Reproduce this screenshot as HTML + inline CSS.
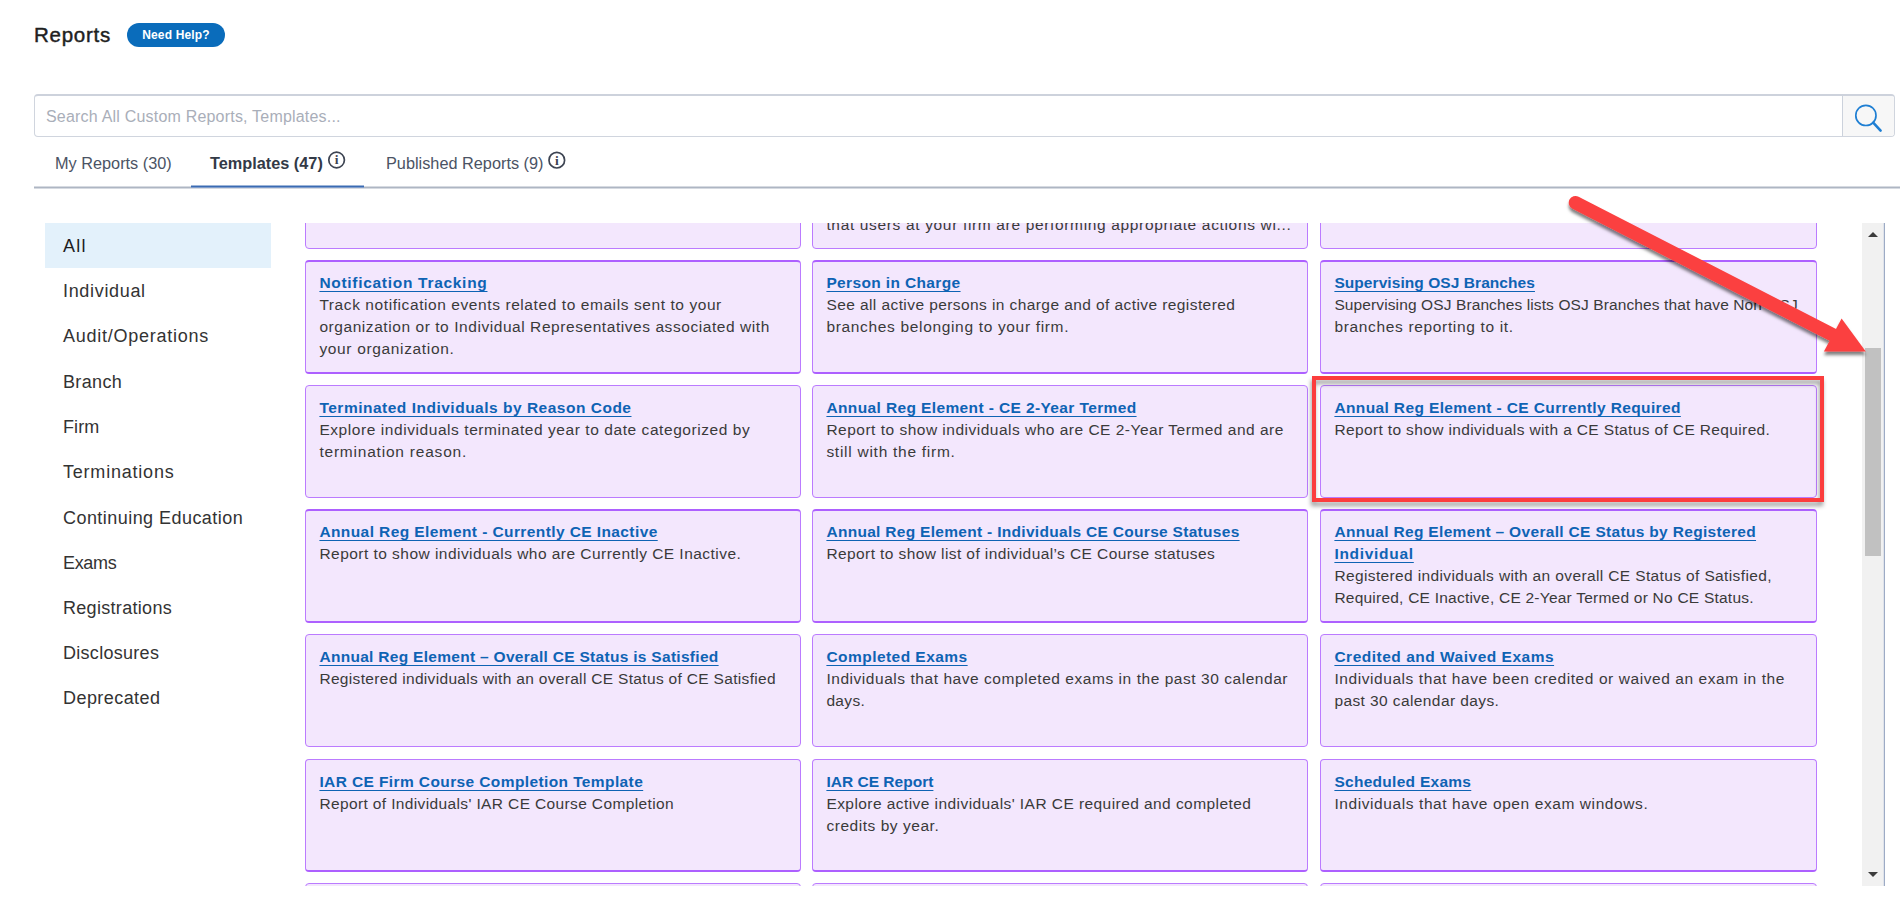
<!DOCTYPE html>
<html lang="en">
<head>
<meta charset="utf-8">
<title>Reports</title>
<style>
html,body{margin:0;padding:0;background:#fff;}
body{width:1900px;height:902px;position:relative;overflow:hidden;font-family:"Liberation Sans",sans-serif;color:#383838;}
.abs{position:absolute;}
h1{position:absolute;left:34px;top:20px;margin:0;font-size:20.5px;line-height:30px;font-weight:400;color:#1f1f1f;letter-spacing:.75px;-webkit-text-stroke:.45px #1f1f1f;white-space:nowrap;}
.pill{position:absolute;left:127px;top:23px;width:98px;height:24px;border-radius:12px;background:#0a6cbb;color:#fff;font-weight:700;font-size:12px;line-height:24px;text-align:center;letter-spacing:.15px;white-space:nowrap;}
.search{position:absolute;left:34px;top:94px;width:1861px;height:43px;box-sizing:border-box;border:1px solid #d0d5de;border-top:2px solid #cdd2dc;border-radius:4px;background:#fff;}
.search .ph{position:absolute;left:11px;top:0;line-height:41px;font-size:16px;color:#a9aeb9;letter-spacing:.2px;white-space:nowrap;}
.search .btn{position:absolute;right:0;top:0;width:51px;height:40px;border-left:1px solid #ccd2dc;background:#f7f7f7;border-radius:0 3px 3px 0;}
.tab{position:absolute;top:150px;line-height:26px;font-size:16.3px;color:#4b5364;white-space:nowrap;}
.tab.on{font-weight:700;color:#333a47;}
.rule{position:absolute;left:34px;top:186px;width:1866px;height:3px;background:linear-gradient(to bottom,#d6dae1 0 1px,#aeb6c3 1px 2px,#d6dae1 2px 3px);}
.rule2{position:absolute;left:191px;top:185px;width:173px;height:3px;background:linear-gradient(to bottom,#9db5d9 0 1px,#3a6bb3 1px 2px,#7f9ccb 2px 3px);}
.side div{position:absolute;left:45px;width:226px;height:45px;box-sizing:border-box;padding-left:18px;font-size:18px;line-height:47px;color:#333;white-space:nowrap;}
.side div.on{background:#e3f1fb;color:#1d1d1d;}
.scroll{position:absolute;left:300px;top:223px;width:1530px;height:663px;overflow:hidden;}
.scroll .in{position:absolute;left:-300px;top:0;width:1900px;height:663px;}
.card{position:absolute;box-sizing:border-box;border:1px solid #bb7bff;border-radius:4px;background:#f3e7fd;padding:11px 0 0 13.4px;font-size:15.5px;line-height:22px;color:#3a3a3a;white-space:nowrap;overflow:hidden;}
.card .t{font-weight:700;color:#0e63b4;text-decoration:underline;text-decoration-thickness:1px;text-underline-offset:3px;}
.track{position:absolute;left:1862px;top:223px;width:21px;height:663px;background:#f1f1f1;}
.trline{position:absolute;left:1883px;top:223px;width:2px;height:663px;background:linear-gradient(90deg,#dfe3ea 0 1px,#9dabc5 1px 2px);}
.thumb{position:absolute;left:1865px;top:348px;width:16px;height:208px;background:#c1c1c1;}
.arrU{position:absolute;left:1868px;top:231.5px;width:0;height:0;border-left:5px solid transparent;border-right:5px solid transparent;border-bottom:5.5px solid #3c3c3c;}
.arrD{position:absolute;left:1868px;top:871.5px;width:0;height:0;border-left:5px solid transparent;border-right:5px solid transparent;border-top:5.5px solid #3c3c3c;}
.redbox{position:absolute;left:1312px;top:376px;width:512px;height:126px;box-sizing:border-box;border:4px solid #fb3e3e;box-shadow:-2px 4px 4px rgba(0,0,0,.35), inset 1px 2px 2px rgba(0,0,0,.28);}
</style>
</head>
<body>
<h1>Reports</h1>
<div class="pill">Need Help?</div>

<div class="search">
  <span class="ph">Search All Custom Reports, Templates...</span>
  <div class="btn">
    <svg class="abs" style="left:0;top:0" width="51" height="40" viewBox="0 0 51 40">
      <circle cx="22.9" cy="19.4" r="10.1" fill="none" stroke="#1f7fd3" stroke-width="1.7"/>
      <path d="M30.2 26.6 L37.6 34.6" stroke="#1f7fd3" stroke-width="2.6" stroke-linecap="round" fill="none"/>
    </svg>
  </div>
</div>

<div class="tab" style="left:55px;letter-spacing:0px">My Reports (30)</div>
<div class="tab on" style="left:210px;letter-spacing:0px">Templates (47)</div>
<svg class="abs" style="left:326px;top:149px" width="22" height="22" viewBox="0 0 22 22"><circle cx="10.6" cy="11" r="7.8" fill="none" stroke="#3d4452" stroke-width="1.7"/><text x="10.6" y="15.4" text-anchor="middle" font-family="Liberation Serif, serif" font-weight="700" font-size="13.5" fill="#3d4452">i</text></svg>
<div class="tab" style="left:386px;letter-spacing:0px">Published Reports (9)</div>
<svg class="abs" style="left:546px;top:149px" width="22" height="22" viewBox="0 0 22 22"><circle cx="10.8" cy="11.2" r="7.8" fill="none" stroke="#3d4452" stroke-width="1.7"/><text x="10.8" y="15.6" text-anchor="middle" font-family="Liberation Serif, serif" font-weight="700" font-size="13.5" fill="#3d4452">i</text></svg>
<div class="rule"></div>
<div class="rule2"></div>

<div class="side">
<div class="on" style="top:223px;letter-spacing:1.242px">All</div>
<div style="top:268px;letter-spacing:0.671px">Individual</div>
<div style="top:313px;letter-spacing:0.748px">Audit/Operations</div>
<div style="top:359px;letter-spacing:0.351px">Branch</div>
<div style="top:404px;letter-spacing:0.072px">Firm</div>
<div style="top:449px;letter-spacing:0.787px">Terminations</div>
<div style="top:495px;letter-spacing:0.451px">Continuing Education</div>
<div style="top:540px;letter-spacing:-0.329px">Exams</div>
<div style="top:585px;letter-spacing:0.304px">Registrations</div>
<div style="top:630px;letter-spacing:0.287px">Disclosures</div>
<div style="top:675px;letter-spacing:0.438px">Deprecated</div>
</div>

<div class="scroll"><div class="in">
<div class="card" style="left:305px;top:-87px;width:496px;height:113px"></div>
<div class="card" style="left:812px;top:-87px;width:496px;height:113px"><br><br><br><span style="letter-spacing:0.656px">that users at your firm are performing appropriate actions wi...</span><br></div>
<div class="card" style="left:1320px;top:-87px;width:497px;height:113px"></div>
<div class="card" style="left:305px;top:37px;width:496px;height:114px;border-top:2px solid #ad60ff;padding-top:10px;border-bottom:2px solid #ad60ff"><a class="t" style="letter-spacing:0.704px">Notification Tracking</a><br><span style="letter-spacing:0.582px">Track notification events related to emails sent to your</span><br><span style="letter-spacing:0.562px">organization or to Individual Representatives associated with</span><br><span style="letter-spacing:0.658px">your organization.</span><br></div>
<div class="card" style="left:812px;top:37px;width:496px;height:114px;border-top:2px solid #ad60ff;padding-top:10px;border-bottom:2px solid #ad60ff"><a class="t" style="letter-spacing:0.364px">Person in Charge</a><br><span style="letter-spacing:0.417px">See all active persons in charge and of active registered</span><br><span style="letter-spacing:0.667px">branches belonging to your firm.</span><br></div>
<div class="card" style="left:1320px;top:37px;width:497px;height:114px;border-top:2px solid #ad60ff;padding-top:10px;border-bottom:2px solid #ad60ff"><a class="t" style="letter-spacing:0.065px">Supervising OSJ Branches</a><br><span style="letter-spacing:0.112px">Supervising OSJ Branches lists OSJ Branches that have Non-OSJ</span><br><span style="letter-spacing:0.661px">branches reporting to it.</span><br></div>
<div class="card" style="left:305px;top:162px;width:496px;height:113px"><a class="t" style="letter-spacing:0.505px">Terminated Individuals by Reason Code</a><br><span style="letter-spacing:0.567px">Explore individuals terminated year to date categorized by</span><br><span style="letter-spacing:0.790px">termination reason.</span><br></div>
<div class="card" style="left:812px;top:162px;width:496px;height:113px"><a class="t" style="letter-spacing:0.383px">Annual Reg Element - CE 2-Year Termed</a><br><span style="letter-spacing:0.495px">Report to show individuals who are CE 2-Year Termed and are</span><br><span style="letter-spacing:0.734px">still with the firm.</span><br></div>
<div class="card" style="left:1320px;top:162px;width:497px;height:113px"><a class="t" style="letter-spacing:0.375px">Annual Reg Element - CE Currently Required</a><br><span style="letter-spacing:0.364px">Report to show individuals with a CE Status of CE Required.</span><br></div>
<div class="card" style="left:305px;top:286px;width:496px;height:114px;border-top:2px solid #ad60ff;padding-top:10px;border-bottom:2px solid #ad60ff"><a class="t" style="letter-spacing:0.406px">Annual Reg Element - Currently CE Inactive</a><br><span style="letter-spacing:0.464px">Report to show individuals who are Currently CE Inactive.</span><br></div>
<div class="card" style="left:812px;top:286px;width:496px;height:114px;border-top:2px solid #ad60ff;padding-top:10px;border-bottom:2px solid #ad60ff"><a class="t" style="letter-spacing:0.300px">Annual Reg Element - Individuals CE Course Statuses</a><br><span style="letter-spacing:0.409px">Report to show list of individual’s CE Course statuses</span><br></div>
<div class="card" style="left:1320px;top:286px;width:497px;height:114px;border-top:2px solid #ad60ff;padding-top:10px;border-bottom:2px solid #ad60ff"><a class="t" style="letter-spacing:0.323px">Annual Reg Element – Overall CE Status by Registered</a><br><a class="t" style="letter-spacing:0.706px">Individual</a><br><span style="letter-spacing:0.372px">Registered individuals with an overall CE Status of Satisfied,</span><br><span style="letter-spacing:0.227px">Required, CE Inactive, CE 2-Year Termed or No CE Status.</span><br></div>
<div class="card" style="left:305px;top:411px;width:496px;height:113px"><a class="t" style="letter-spacing:0.295px">Annual Reg Element – Overall CE Status is Satisfied</a><br><span style="letter-spacing:0.322px">Registered individuals with an overall CE Status of CE Satisfied</span><br></div>
<div class="card" style="left:812px;top:411px;width:496px;height:113px"><a class="t" style="letter-spacing:0.458px">Completed Exams</a><br><span style="letter-spacing:0.548px">Individuals that have completed exams in the past 30 calendar</span><br><span style="letter-spacing:0.334px">days.</span><br></div>
<div class="card" style="left:1320px;top:411px;width:497px;height:113px"><a class="t" style="letter-spacing:0.507px">Credited and Waived Exams</a><br><span style="letter-spacing:0.573px">Individuals that have been credited or waived an exam in the</span><br><span style="letter-spacing:0.406px">past 30 calendar days.</span><br></div>
<div class="card" style="left:305px;top:536px;width:496px;height:113px;border-bottom:2px solid #ad60ff"><a class="t" style="letter-spacing:0.392px">IAR CE Firm Course Completion Template</a><br><span style="letter-spacing:0.369px">Report of Individuals&#x27; IAR CE Course Completion</span><br></div>
<div class="card" style="left:812px;top:536px;width:496px;height:113px;border-bottom:2px solid #ad60ff"><a class="t" style="letter-spacing:0.017px">IAR CE Report</a><br><span style="letter-spacing:0.435px">Explore active individuals&#x27; IAR CE required and completed</span><br><span style="letter-spacing:0.543px">credits by year.</span><br></div>
<div class="card" style="left:1320px;top:536px;width:497px;height:113px;border-bottom:2px solid #ad60ff"><a class="t" style="letter-spacing:0.281px">Scheduled Exams</a><br><span style="letter-spacing:0.588px">Individuals that have open exam windows.</span><br></div>
<div class="card" style="left:305px;top:660px;width:496px;height:113px"></div>
<div class="card" style="left:812px;top:660px;width:496px;height:113px"></div>
<div class="card" style="left:1320px;top:660px;width:497px;height:113px"></div>
</div></div>

<div class="track"></div>
<div class="trline"></div>
<div class="thumb"></div>
<div class="arrU"></div>
<div class="arrD"></div>


<svg class="abs" style="left:0;top:0;pointer-events:none" width="1900" height="902" viewBox="0 0 1900 902">
  <defs>
    <filter id="sh" x="-5%" y="-10%" width="110%" height="130%">
      <feDropShadow dx="0" dy="3.5" stdDeviation="1.8" flood-color="#000" flood-opacity=".5"/>
    </filter>
    <filter id="sh2" x="-5%" y="-10%" width="110%" height="130%">
      <feDropShadow dx="-1" dy="4" stdDeviation="1.9" flood-color="#000" flood-opacity=".38"/>
    </filter>
  </defs>
  <rect x="1314" y="378" width="508" height="122" fill="none" stroke="#fb3e3e" stroke-width="4" filter="url(#sh2)"/>
  <g filter="url(#sh)" fill="#fb4040" stroke="none">
    <path d="M1575.5 202.7 L1834 335.5" stroke="#fb4040" stroke-width="13.5" stroke-linecap="round" fill="none"/>
    <polygon points="1841.6,318.4 1823.9,351.6 1865.8,351.6"/>
  </g>
</svg>
</body>
</html>
